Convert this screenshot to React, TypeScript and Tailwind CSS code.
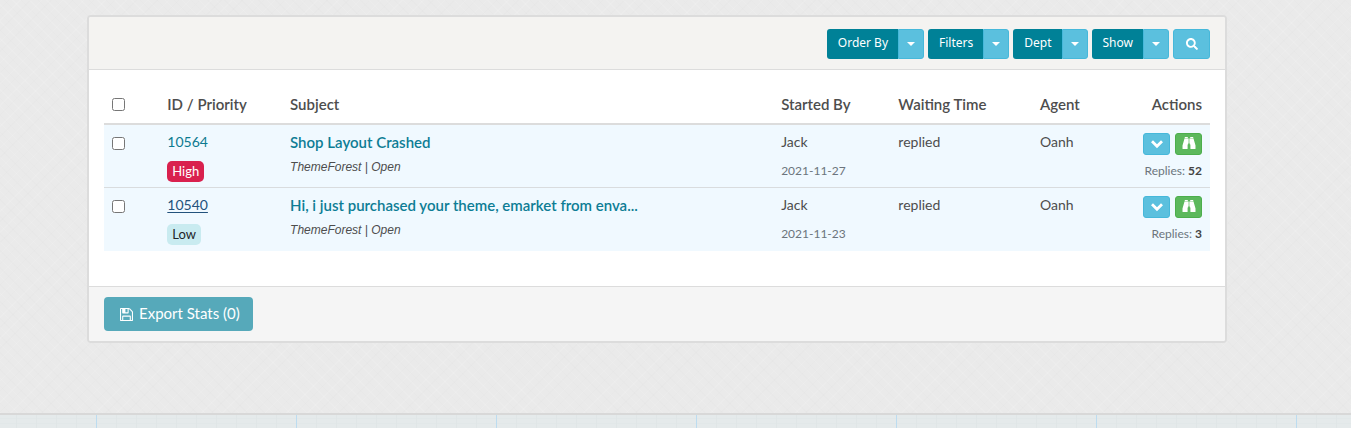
import type { ReactNode } from "react"
import { FaSearch } from "react-icons/fa"

interface Ticket {
  id: string
  priority: "High" | "Low"
  subject: string
  source: string
  startedBy: string
  date: string
  waiting: string
  agent: string
  replies: number
  active?: boolean
}

const tickets: Ticket[] = [
  {
    id: "10564",
    priority: "High",
    subject: "Shop Layout Crashed",
    source: "ThemeForest | Open",
    startedBy: "Jack",
    date: "2021-11-27",
    waiting: "replied",
    agent: "Oanh",
    replies: 52,
  },
  {
    id: "10540",
    priority: "Low",
    subject: "Hi, i just purchased your theme, emarket from enva...",
    source: "ThemeForest | Open",
    startedBy: "Jack",
    date: "2021-11-23",
    waiting: "replied",
    agent: "Oanh",
    replies: 3,
    active: true,
  },
]

const priorityStyles = {
  High: "bg-[#d9214e] text-white",
  Low: "bg-[#c9ebf0] text-[#212529]",
}

function SaveIcon() {
  return (
    <svg viewBox="0 128 1536 1536" className="size-[13px] shrink-0" fill="currentColor" aria-hidden="true">
      <path d="M384 1536h768v-384h-768v384zM1280 1536h128v-896q0-14-10-38.5t-20-34.5l-281-281q-10-10-34-20t-39-10v416q0 40-28 68t-68 28h-576q-40 0-68-28t-28-68v-416h-128v1280h128v-416q0-40 28-68t68-28h832q40 0 68 28t28 68v416zM896 608v-320q0-13-9.5-22.5t-22.5-9.5h-192q-13 0-22.5 9.5t-9.5 22.5v320q0 13 9.5 22.5t22.5 9.5h192q13 0 22.5-9.5t9.5-22.5zM1536 640v928q0 40-28 68t-68 28h-1344q-40 0-68-28t-28-68v-1344q0-40 28-68t68-28h928q40 0 88 20t76 48l280 280q28 28 48 76t20 88z" />
    </svg>
  )
}

function ChevronIcon() {
  return (
    <svg viewBox="0 0 12 12" className="size-3" fill="none" stroke="currentColor" strokeWidth="2.8" aria-hidden="true">
      <path d="M1 3.2 6 8.2l5-5" />
    </svg>
  )
}

function BinocularsIcon() {
  return (
    <svg viewBox="0 0 14 12" className="h-3 w-[14px]" fill="currentColor" aria-hidden="true">
      <path d="M3.2 0h2.6v1.2H2.7V.5q0-.5.5-.5zM8.2 0h2.6q.5 0 .5.5v.7H8.2z" />
      <path d="M2.5 1.6h3.6v6H5.6v3.9q0 .5-.5.5H1q-.5 0-.5-.5V8.6zM11.5 1.6H7.9v6h.5v3.9q0 .5.5.5H13q.5 0 .5-.5V8.6z" />
      <path d="M6.4 1.6h1.2v5H6.4z" />
    </svg>
  )
}

function SplitButton({ label }: { label: string }) {
  return (
    <div className="flex h-[30px] font-['Noto_Sans',sans-serif] text-xs text-white">
      <button type="button" className="rounded-l-[3px] bg-[#008197] pr-[10px] pb-[2px] pl-[11px]">
        {label}
      </button>
      <button
        type="button"
        aria-label={`${label} options`}
        className="flex w-[26px] items-center justify-center rounded-r-[3px] border border-[#46b8da] bg-[#5bc0de]"
      >
        <svg viewBox="0 0 8 4" className="h-1 w-2" fill="currentColor" aria-hidden="true">
          <path d="M0 0h8L4 4z" />
        </svg>
      </button>
    </div>
  )
}

function Heading({ children, className = "" }: { children: ReactNode; className?: string }) {
  return <th className={`px-2 py-[9px] text-[15px] leading-5 font-semibold ${className}`}>{children}</th>
}

function TicketRow({ ticket }: { ticket: Ticket }) {
  return (
    <tr className="border-b border-[#d9dcde] bg-[#f0f9ff] align-top last:border-[#f0f9ff]">
      <td className="px-2 pt-3">
        <input type="checkbox" aria-label={`Select ticket ${ticket.id}`} className="block size-[13px]" />
      </td>
      <td className="px-2 pt-[7px] pb-[5px]">
        <a href="#" className={`block leading-5 ${ticket.active ? "text-[#23527c] underline underline-offset-2" : "text-[#0d7a90]"}`}>
          {ticket.id}
        </a>
        <span className={`mt-[9px] inline-block rounded-[5px] px-[5px] text-[13px] leading-[21px] ${priorityStyles[ticket.priority]}`}>
          {ticket.priority}
        </span>
      </td>
      <td className="px-2 pt-[7px]">
        <a href="#" className="block truncate text-[15px] leading-5 font-semibold text-[#0d7d95]">
          {ticket.subject}
        </a>
        <em className="mt-[5px] block font-['Liberation_Sans',sans-serif] text-xs leading-5">{ticket.source}</em>
      </td>
      <td className="px-2 pt-[7px]">
        <div className="leading-5">{ticket.startedBy}</div>
        <div className="mt-[9px] text-xs leading-5 text-[#6c757d]">{ticket.date}</div>
      </td>
      <td className="px-2 pt-[7px] leading-5">{ticket.waiting}</td>
      <td className="px-2 pt-[7px] leading-5">{ticket.agent}</td>
      <td className="px-2 pt-2">
        <div className="flex justify-end gap-[5px] text-white">
          <button
            type="button"
            aria-label="Show details"
            className="flex h-[22px] w-[27px] items-center justify-center rounded-[3px] border border-[#46b8da] bg-[#5bc0de]"
          >
            <ChevronIcon />
          </button>
          <button
            type="button"
            aria-label="Preview ticket"
            className="flex h-[22px] w-[27px] items-center justify-center rounded-[3px] border border-[#4cae4c] bg-[#5cb85c] pb-[2px]"
          >
            <BinocularsIcon />
          </button>
        </div>
        <div className="mt-[6px] text-right text-xs leading-5 text-[#6c757d]">
          Replies: <b className="text-[#444]">{ticket.replies}</b>
        </div>
      </td>
    </tr>
  )
}

export default function App() {
  return (
    <div className="bg-[#eaeaea] bg-[repeating-linear-gradient(45deg,#0000_0_5px,#00000002_5px_6px,#0000_6px_11px,#ffffff18_11px_12px),repeating-linear-gradient(135deg,#0000_0_6px,#00000002_6px_7px,#0000_7px_14px,#ffffff18_14px_15px)] font-[Lato,sans-serif] text-sm text-[#4d4d4d]">
      <main className="pt-[15px] pr-[124px] pb-[70px] pl-[87px]">
        <section className="overflow-hidden rounded-[4px] border-2 border-[#dcdcdc] bg-white">
          <div className="flex justify-end gap-1 border-b border-[#dcdcdc] bg-[#f4f3f1] pt-3 pr-[15px] pb-[10px]">
            <SplitButton label="Order By" />
            <SplitButton label="Filters" />
            <SplitButton label="Dept" />
            <SplitButton label="Show" />
            <button
              type="button"
              aria-label="Search"
              className="flex h-[30px] w-[37px] items-center justify-center rounded-[3px] border border-[#46b8da] bg-[#5bc0de] text-white"
            >
              <FaSearch className="size-3" />
            </button>
          </div>

          <div className="px-[15px] pt-[15px] pb-[35px]">
            <table className="w-full table-fixed border-collapse text-left">
              <thead>
                <tr className="border-b-2 border-[#dcdcdc]">
                  <th className="w-[5%] px-2">
                    <input type="checkbox" aria-label="Select all tickets" className="block size-[13px]" />
                  </th>
                  <Heading className="w-[11.1%]">ID / Priority</Heading>
                  <Heading className="w-[44.4%]">Subject</Heading>
                  <Heading className="w-[10.6%]">Started By</Heading>
                  <Heading className="w-[12.8%]">Waiting Time</Heading>
                  <Heading>Agent</Heading>
                  <Heading className="text-right">Actions</Heading>
                </tr>
              </thead>
              <tbody>
                {tickets.map((ticket) => (
                  <TicketRow key={ticket.id} ticket={ticket} />
                ))}
              </tbody>
            </table>
          </div>

          <div className="border-t border-[#dcdcdc] bg-[#f5f5f5] px-[15px] py-[10px]">
            <button
              type="button"
              className="flex h-[34px] items-center gap-[6px] rounded-[4px] bg-[#56a9ba] pr-[13px] pl-4 text-[15px] text-white"
            >
              <SaveIcon />
              Export Stats (0)
            </button>
          </div>
        </section>
      </main>

      {/* Graph paper strip */}
      <footer className="h-[15px] border-t-2 border-[#d8d8d8] bg-[#e5eaeb] bg-[repeating-linear-gradient(90deg,#0000_0_96px,#bcdcf0_96px_97px,#0000_97px_200px),repeating-linear-gradient(90deg,#0000_0_16px,#e0e6e7_16px_17px,#0000_17px_20px),repeating-linear-gradient(0deg,#0000_0_4px,#e2e8e9_4px_5px)]" />
    </div>
  )
}
